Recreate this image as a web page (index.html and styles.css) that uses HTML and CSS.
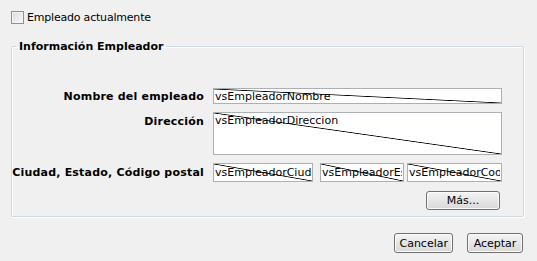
FILE: index.html
```html
<!DOCTYPE html>
<html lang="es">
<head>
    <meta charset="UTF-8">
    <title>Información Empleador</title>
    <link rel="stylesheet" href="styles.css">
</head>
<body>
    <label class="check-row">
        <input type="checkbox" class="check">
        <span>Empleado actualmente</span>
    </label>

    <fieldset class="group">
        <legend>Información Empleador</legend>
        <div class="form-grid">
            <label class="label" for="nombre">Nombre del empleado</label>
            <input class="field lined" id="nombre" type="text" value="vsEmpleadorNombre" readonly>

            <label class="label top" for="direccion">Dirección</label>
            <textarea class="field area lined" id="direccion" readonly>vsEmpleadorDireccion</textarea>

            <label class="label" for="ciudad">Ciudad, Estado, Código postal</label>
            <div class="city-row">
                <input class="field tall lined" id="ciudad" type="text" value="vsEmpleadorCiudad" readonly>
                <input class="field tall lined" type="text" value="vsEmpleadorEstado" readonly>
                <input class="field tall lined" type="text" value="vsEmpleadorCodigoPostal" readonly>
            </div>
        </div>
        <div class="more-row">
            <button type="button" class="btn more">Más...</button>
        </div>
    </fieldset>

    <div class="actions">
        <button type="button" class="btn">Cancelar</button>
        <button type="button" class="btn">Aceptar</button>
    </div>
</body>
</html>
```

FILE: styles.css
```css
/* dialog look, Tahoma-ish sizes */
body {
    margin: 0;
    padding: 0;
    background-color: #f0f0f0;
    font-family: "DejaVu Sans", sans-serif;
    font-size: 11px;
    color: #000;
}

.check-row {
    display: flex;
    align-items: center;
    gap: 3px;
    margin: 11px 0 0 11px;
    height: 13px;
    letter-spacing: -0.2px;
}

.check {
    appearance: none;
    width: 13px;
    height: 13px;
    margin: 0;
    border: 1px solid #8e8f8f;
    background: linear-gradient(135deg, #dcdcdc, #f8f8f8);
    box-shadow: inset 0 0 0 1px #f4f4f4;
}

.group {
    margin: 16px 13px 0 11px;
    padding: 35px 21px 6px 0;
    border: 1px solid #d0d9df;
    border-radius: 2px;
    box-shadow: inset 1px 1px 0 #fff, 1px 1px 0 #fff;
}

.group legend {
    margin-left: 4px;
    padding: 0 3px;
    font-weight: bold;
}

.form-grid {
    display: grid;
    grid-template-columns: 192px 1fr;
    column-gap: 9px;
    row-gap: 8px;
    align-items: center;
}

.label {
    text-align: right;
    font-weight: bold;
    white-space: nowrap;
    letter-spacing: 0.2px;
}

.label.top {
    align-self: start;
    padding-top: 3px;
}

.field {
    box-sizing: border-box;
    width: 100%;
    height: 16px;
    margin: 0;
    padding: 0 1px;
    border: 1px solid #aab0b6;
    font-family: inherit;
    font-size: 11px;
    color: #000;
    background-color: #fff;
    outline: none;
}

/* the stray diagonal strokes over the fields */
.lined {
    background-image: linear-gradient(to top right, transparent calc(50% - 0.8px), #000 50%, transparent calc(50% + 0.8px));
}

.area {
    height: 43px;
    resize: none;
    overflow: hidden;
    padding-top: 1px;
    line-height: 13px;
}

.city-row {
    display: grid;
    grid-template-columns: 100px 84px 1fr;
    gap: 0 7px;
}

.city-row .field:last-child {
    margin-left: -4px;
    width: calc(100% + 4px);
}

.tall {
    height: 19px;
}

.more-row {
    display: flex;
    justify-content: flex-end;
    margin-top: 9px;
    padding-right: 2px;
}

.btn {
    height: 20px;
    padding: 0 6px;
    border: 1px solid #707070;
    border-radius: 3px;
    background: linear-gradient(#f4f4f4, #e6e6e6 50%, #d8d8d8);
    box-shadow: inset 0 0 0 1px #fbfbfb;
    font-family: inherit;
    font-size: 11px;
    color: #000;
}

.more {
    width: 74px;
    height: 19px;
}

.actions {
    display: flex;
    justify-content: flex-end;
    gap: 14px;
    margin: 16px 14px 0 0;
}

.actions .btn {
    min-width: 56px;
    padding: 0 4px;
}
```
